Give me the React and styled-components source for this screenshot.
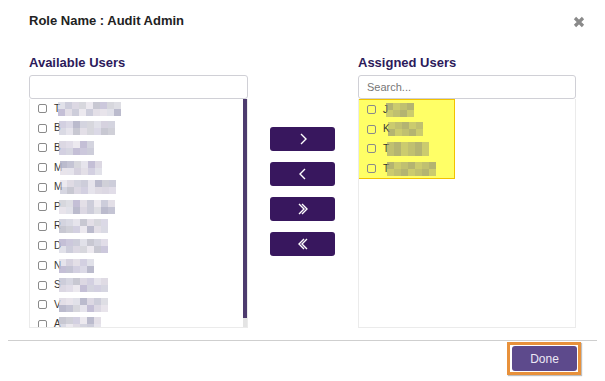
import React from "react";
import styled, { createGlobalStyle } from "styled-components";

const Global = createGlobalStyle`
  html, body { margin: 0; padding: 0; background: #fff; }
  body { font-family: "Liberation Sans", Arial, sans-serif; }
  * { box-sizing: border-box; }
`;

const Modal = styled.div`
  width: 605px;
  height: 381px;
  background: #fff;
  display: flex;
  flex-direction: column;
`;

const Header = styled.div`
  display: flex;
  justify-content: space-between;
  align-items: center;
  padding: 13px 20px 0 29px;
  height: 29px;
`;

const Title = styled.h4`
  margin: 0;
  font-size: 13px;
  line-height: 16px;
  font-weight: 700;
  color: #222;
`;

const Close = styled.button`
  border: 0;
  background: none;
  padding: 0;
  width: 12px;
  height: 12px;
  display: flex;
  cursor: pointer;
  margin-top: 2px;
`;

const Body = styled.div`
  display: flex;
  align-items: flex-start;
  padding: 26px 29px 0 29px;
`;

const Column = styled.div`
  width: ${(p) => p.$w}px;
  display: flex;
  flex-direction: column;
`;

const Label = styled.div`
  font-size: 13px;
  line-height: 16px;
  font-weight: 700;
  color: #2c1a5a;
  margin-bottom: 4px;
`;

const Search = styled.input`
  height: 24px;
  width: 100%;
  border: 1px solid #d0d0d6;
  border-radius: 3px;
  padding: 0 8px;
  font-size: 11px;
  font-family: "Liberation Sans", Arial, sans-serif;
  color: #333;
  outline: none;
  &::placeholder { color: #777; }
`;

const ListBox = styled.div`
  height: 229px;
  border: 1px solid #ebebeb;
  border-top: 0;
  display: flex;
  overflow: hidden;
`;

const Items = styled.div`
  flex: 1;
  overflow: hidden;
`;

const ScrollBar = styled.div`
  width: 4px;
  display: flex;
  flex-direction: column;
  background: #e4e4e4;
`;

const Thumb = styled.div`
  height: 219px;
  background: #4d3b6e;
`;

const Highlight = styled.div`
  width: 97px;
  background: #ffff66;
  border: 1px solid #f2c200;
  margin-left: -1px;
`;

const Row = styled.label`
  display: flex;
  align-items: center;
  height: 19.6px;
  padding-left: 8px;
  font-size: 10px;
  color: #333;
`;

const Check = styled.span`
  width: 9px;
  height: 9px;
  border: 1px solid #8a8a8a;
  border-radius: 2px;
  background: ${(p) => (p.$hl ? "transparent" : "#fff")};
  margin-right: 7px;
  flex: none;
`;

const Initial = styled.span`
  font-size: 10px;
  line-height: 10px;
  color: #333;
`;

const Pix = styled.span`
  display: grid;
  grid-template-columns: repeat(${(p) => p.$n}, 7px);
  grid-auto-rows: 7px;
  margin-left: -2px;
`;

const Cell = styled.span`
  background: rgba(${(p) => p.$c}, ${(p) => p.$a});
`;

const Middle = styled.div`
  display: flex;
  flex-direction: column;
  gap: 11px;
  margin: 72px 23px 0 22px;
`;

const MoveBtn = styled.button`
  width: 65px;
  height: 24px;
  border: 0;
  border-radius: 3px;
  background: #38175e;
  display: flex;
  align-items: center;
  justify-content: center;
  cursor: pointer;
`;

const Footer = styled.div`
  margin: 12px 8px 0 8px;
  border-top: 1px solid #cfcfcf;
  display: flex;
  justify-content: flex-end;
  padding: 1px 16px 0 0;
`;

const FocusRing = styled.span`
  display: flex;
  padding: 1px 1px 1px 2px;
  border: 3px solid #e8913b;
  box-shadow: 1px 1px 1px rgba(0, 0, 0, 0.25);
`;

const DoneBtn = styled.button`
  width: 65px;
  height: 25px;
  border: 0;
  border-radius: 3px;
  background: #5d4a8c;
  color: #ece8f4;
  font-size: 12px;
  font-family: "Liberation Sans", Arial, sans-serif;
  outline: none;
  cursor: pointer;
`;

const palette = ["200,200,215", "190,185,210", "210,205,220", "180,180,200", "220,215,225", "195,195,205"];

function Blur({ n, seed, hl }) {
  const cells = [];
  for (let i = 0; i < n * 2; i++) {
    const v = (seed * 31 + i * 17 + (i * i) % 7) % palette.length;
    const a = hl ? 0.45 + ((i + seed) % 3) * 0.1 : 0.55 + ((i * 3 + seed) % 4) * 0.12;
    cells.push(<Cell key={i} $c={hl ? "140,140,120" : palette[v]} $a={a.toFixed(2)} />);
  }
  return <Pix $n={n}>{cells}</Pix>;
}

const available = [
  ["T", 9], ["B", 8], ["B", 5], ["M", 6], ["M", 8], ["P", 8],
  ["R", 7], ["D", 7], ["N", 5], ["S", 7], ["V", 7], ["A", 6],
];
const assigned = [["J", 4], ["K", 5], ["T", 6], ["T", 7]];

function User({ l, n, i, hl }) {
  return (
    <Row>
      <Check $hl={hl} />
      <Initial>{l}</Initial>
      <Blur n={n} seed={i + (hl ? 20 : 0)} hl={hl} />
    </Row>
  );
}

const Chev = ({ d }) => (
  <svg width="12" height="14" viewBox="0 0 12 14" fill="none" stroke="#fff" strokeWidth="1.4">
    <path d={d} />
  </svg>
);

export default function App() {
  return (
    <>
      <Global />
      <Modal>
        <Header>
          <Title>Role Name : Audit Admin</Title>
          <Close aria-label="close">
            <svg width="12" height="12" viewBox="0 0 12 12">
              <path d="M2 2 L10 10 M10 2 L2 10" stroke="#8a8a8a" strokeWidth="3.2" />
            </svg>
          </Close>
        </Header>
        <Body>
          <Column $w={219}>
            <Label>Available Users</Label>
            <Search />
            <ListBox>
              <Items>
                {available.map(([l, n], i) => (
                  <User key={i} l={l} n={n} i={i} />
                ))}
              </Items>
              <ScrollBar>
                <Thumb />
              </ScrollBar>
            </ListBox>
          </Column>
          <Middle>
            <MoveBtn><Chev d="M4 2 L9 7 L4 12" /></MoveBtn>
            <MoveBtn><Chev d="M8 2 L3 7 L8 12" /></MoveBtn>
            <MoveBtn><Chev d="M2 2 L7 7 L2 12 M5 2 L10 7 L5 12" /></MoveBtn>
            <MoveBtn><Chev d="M10 2 L5 7 L10 12 M7 2 L2 7 L7 12" /></MoveBtn>
          </Middle>
          <Column $w={218}>
            <Label>Assigned Users</Label>
            <Search placeholder="Search..." />
            <ListBox>
              <Items>
                <Highlight>
                  {assigned.map(([l, n], i) => (
                    <User key={i} l={l} n={n} i={i} hl />
                  ))}
                </Highlight>
              </Items>
            </ListBox>
          </Column>
        </Body>
        <Footer>
          <FocusRing>
            <DoneBtn>Done</DoneBtn>
          </FocusRing>
        </Footer>
      </Modal>
    </>
  );
}
